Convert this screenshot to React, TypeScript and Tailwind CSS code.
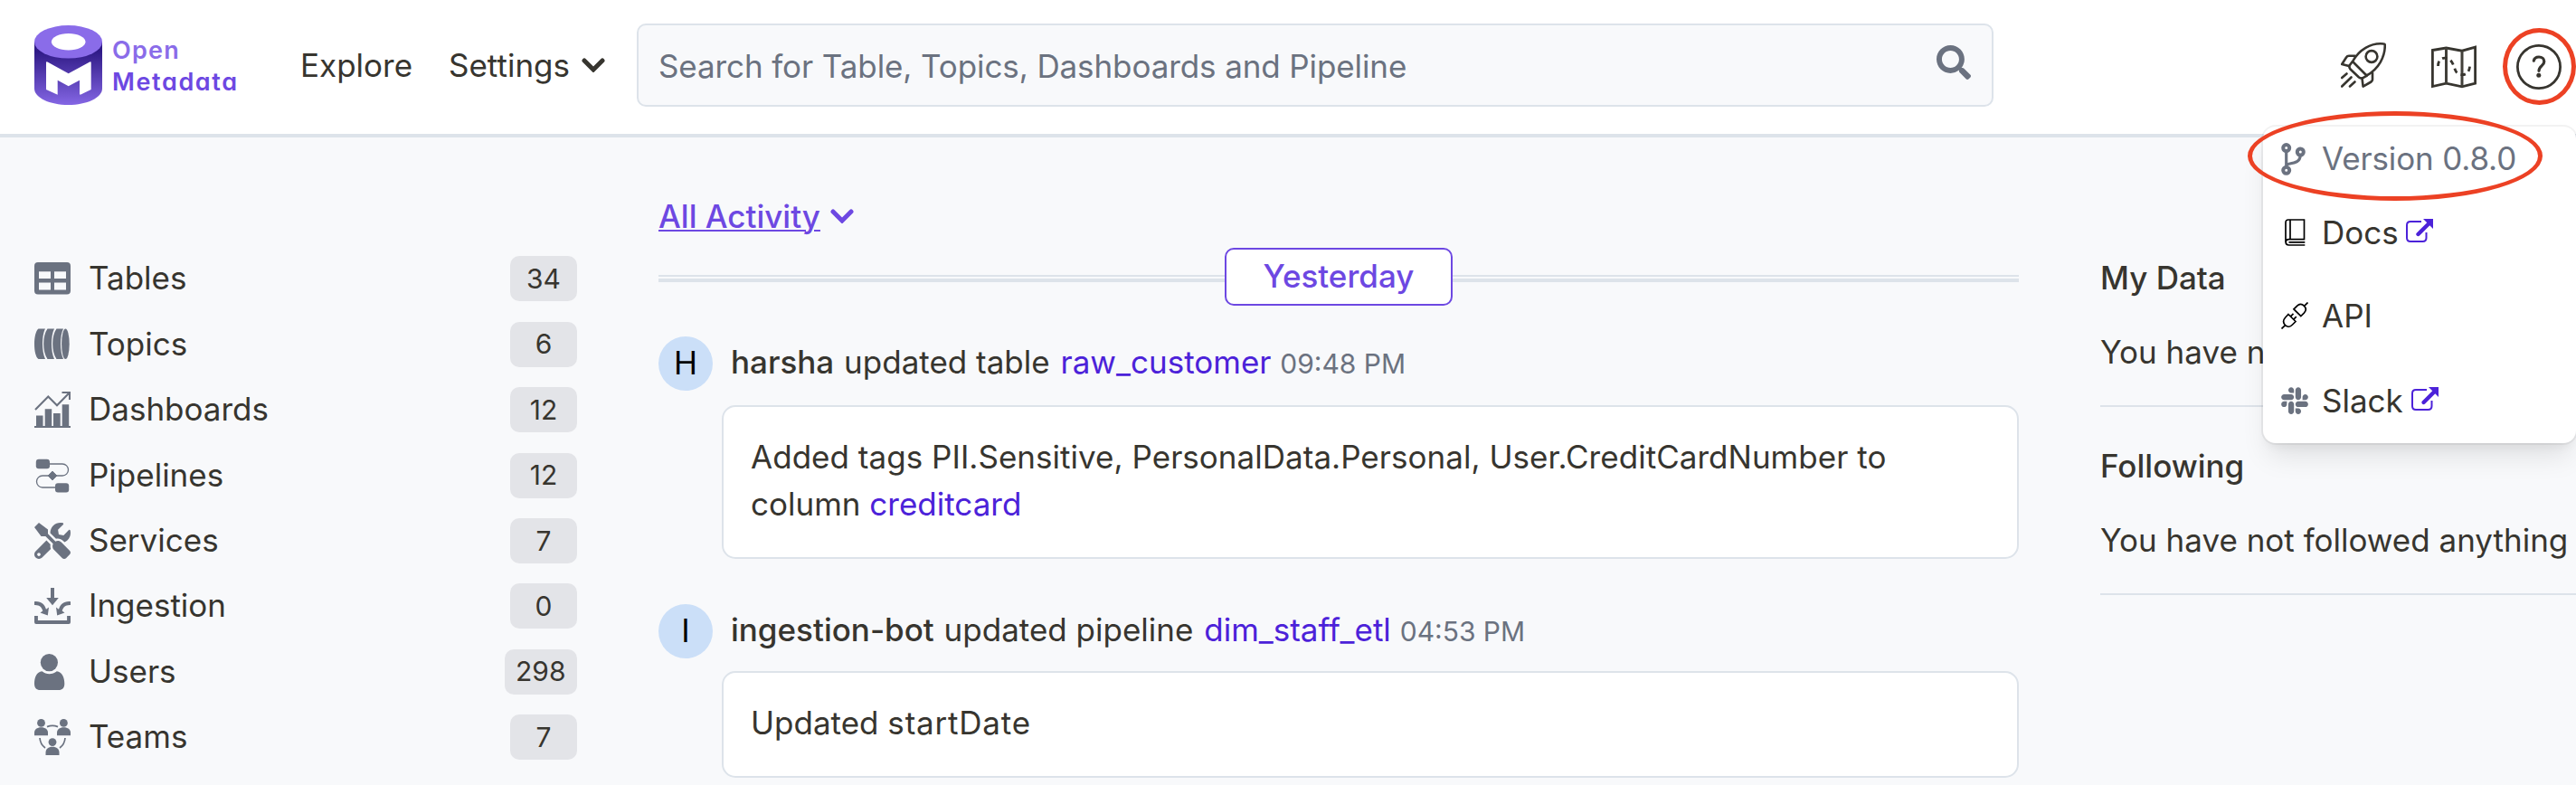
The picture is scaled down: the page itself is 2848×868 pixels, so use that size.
import React from "react";
import { FaSearch, FaSlack, FaTools } from "react-icons/fa";

type IconProps = { className?: string };

function LogoMark() {
  return (
    <svg width="75" height="88" viewBox="0 0 75 88">
      <defs>
        <linearGradient id="cylinder" x1="0" y1="0" x2="0" y2="1">
          <stop offset="0.15" stopColor="#2f1a86" />
          <stop offset="1" stopColor="#8466e4" />
        </linearGradient>
      </defs>
      <path d="M0 18V70C0 80 16.8 88 37.5 88S75 80 75 70V18Z" fill="url(#cylinder)" />
      <ellipse cx="37.5" cy="18.3" rx="37.5" ry="18.3" fill="#8a6ce9" />
      <ellipse cx="37.7" cy="18.2" rx="18.8" ry="9.2" fill="#fff" />
      <path
        d="M13 41.2Q13 39.6 14.5 40.4L37.7 53.3L61.2 40.4Q62.7 39.6 62.7 41.2V71L51.4 76.6Q50 77.2 50 75.6V60.7L37.7 67.3L25.7 60.7V76.7L13 71Z"
        fill="#fff"
      />
    </svg>
  );
}

function Chevron({ className }: IconProps) {
  return (
    <svg width="26" height="16" viewBox="0 0 26 16" fill="none" className={className}>
      <path d="M3 3L13 13L23 3" stroke="currentColor" strokeWidth="5" strokeLinecap="round" strokeLinejoin="miter" />
    </svg>
  );
}

function RocketIcon() {
  return (
    <svg width="50" height="50" viewBox="0 0 50 50" fill="none" stroke="#37352f" strokeWidth="2.6" strokeLinecap="round" strokeLinejoin="round">
      <path d="M13 21C20 8 33 0 47.5 1.5Q48.8 1.6 48.8 3C48.8 16 42 29 28.5 36.5Z" />
      <path d="M12.500 21.500L9.500 25.500Q9 27.500 10.500 29.500L20 38.500Q22 40 24 39.300L28.500 36.800" />
      <path d="M9 26L1.200 24L6 16.500Q7 14.800 9 14.800H15.500" />
      <path d="M23.500 39.500L24.600 48.600L33.500 43.500Q34.800 42.500 35 41V33.500" />
      <circle cx="34" cy="15.500" r="6.400" />
      <path d="M1.200 39L6.500 34.500M1.200 48.500L11.500 38.500M10 48.500L15.500 43.500" />
    </svg>
  );
}

function MapIcon() {
  return (
    <svg width="50" height="50" viewBox="0 0 50 50" fill="none" stroke="#37352f" strokeWidth="2.800">
      <path d="M1.400 6.500L16.500 4L34 7.200L48.600 3.200V43.200L34 46.800L16.500 43.200L1.400 46.500Z" />
      <path d="M16.500 4V43.200M34 7.200V46.800" strokeWidth="3" stroke="#42403a" />
      <path d="M7.500 24C7.500 14 17 13 21.500 18C26.500 23.500 25 32 32 33.500C38.500 34.500 42.700 31 42.700 22" strokeDasharray="5.500 4.500" />
    </svg>
  );
}

function HelpIcon() {
  return (
    <svg width="50" height="50" viewBox="0 0 50 50" fill="none" stroke="#37352f">
      <circle cx="25" cy="25" r="23.600" strokeWidth="2.800" />
      <path d="M19.300 18.200C19.800 15.500 22 14 25 14C28.500 14 30.800 16 30.800 19C30.800 24 25 23.800 25 29.300" strokeWidth="3.200" strokeLinecap="round" />
      <circle cx="24.800" cy="34.300" r="2.500" fill="#37352f" stroke="none" />
    </svg>
  );
}

function TableIcon() {
  return (
    <svg width="40" height="40" viewBox="0 0 40 40" fill="currentColor">
      <path
        fillRule="evenodd"
        d="M4 2H36Q40 2 40 6V33.500Q40 37.500 36 37.500H4Q0 37.500 0 33.500V6Q0 2 4 2ZM5 12.300V20H18V12.300ZM22 12.300V20H35V12.300ZM5 24.500V32.500H18V24.500ZM22 24.500V32.500H35V24.500Z"
      />
    </svg>
  );
}

function TopicIcon() {
  return (
    <svg width="40" height="40" viewBox="0 0 40 40" fill="currentColor">
      <path d="M4.500 2.500H12C8 10 8 28 12 36H4.500C-1.500 32-1.500 7 4.500 2.500Z" />
      <path d="M14.500 2.500H22C18 10 18 28 22 36H14.500C8.800 28 8.800 10 14.500 2.500Z" />
      <path d="M24.500 2.500H32C28 10 28 28 32 36H24.500C18.800 28 18.800 10 24.500 2.500Z" />
      <ellipse cx="34.400" cy="19.300" rx="4.300" ry="16.800" />
    </svg>
  );
}

function DashboardIcon() {
  return (
    <svg width="40" height="40" viewBox="0 0 40 40" fill="currentColor">
      <path d="M2 26.500H9.500V38H2ZM11.700 19.300H19.200V38H11.700ZM21 24H28.700V38H21ZM30.700 14.200H38.200V38H30.700ZM0 38H40V40H0Z" />
      <path d="M1 20L15.300 5.500L25 15.200L38.500 1.500M30.500 1H39V9" fill="none" stroke="currentColor" strokeWidth="2.100" />
    </svg>
  );
}

function PipelineIcon() {
  return (
    <svg width="40" height="40" viewBox="0 0 40 40" fill="currentColor">
      <path d="M15 7H31A6.500 6.500 0 0 1 31 20H9A6.500 6.500 0 0 0 9 33H25" fill="none" stroke="currentColor" strokeWidth="1.300" />
      <rect x="1.800" y="1.800" width="15.200" height="10.400" rx="3" />
      <rect x="23" y="28.200" width="15.200" height="10.200" rx="3" />
      <path d="M20 15L25 20L20 25L15 20Z" stroke="currentColor" strokeLinejoin="round" strokeWidth="0.800" />
    </svg>
  );
}

function IngestionIcon() {
  return (
    <svg width="40" height="40" viewBox="0 0 40 40" fill="currentColor">
      <path d="M18 0H22V11H26.800L20 19.300L13.200 11H18Z" />
      <path d="M0 31H3.900V36H36.100V31H40V38Q40 40 38 40H2Q0 40 0 38Z" />
      <path d="M0 15.200C7.500 14.500 11.500 18.500 13 23.800L16 21.500L14.800 30.600L6.500 27.500L9.300 25.500C8.300 21.500 5.500 18.600 0 19Z" />
      <path d="M40 15.200C32.500 14.500 28.500 18.500 27 23.800L24 21.500L25.200 30.600L33.500 27.500L30.700 25.500C31.700 21.500 34.500 18.600 40 19Z" />
    </svg>
  );
}

function UserIcon() {
  return (
    <svg width="40" height="40" viewBox="0 0 40 40" fill="currentColor">
      <circle cx="16.400" cy="9.600" r="9.600" />
      <path d="M8.500 19.300C2.500 20 0 26 0 33C0 37.500 2.300 40 6.500 40H26.800C31 40 33.300 37.500 33.300 33C33.300 26 30.500 20 24.800 19.300C22.500 21.300 19.500 22.300 16.600 22.300S10.800 21.300 8.500 19.300Z" />
    </svg>
  );
}

function TeamIcon() {
  return (
    <svg width="40" height="40" viewBox="0 0 40 40" fill="currentColor">
      <circle cx="7.500" cy="4.400" r="4.400" />
      <path d="M0 18.300V15C0 11.500 3 9.200 7.500 9.200S15 11.500 15 15V18.300Z" />
      <circle cx="32.400" cy="4.400" r="4.400" />
      <path d="M25 18.300V15C25 11.500 28 9.200 32.500 9.200S40 11.500 40 15V18.300Z" />
      <circle cx="20" cy="25.600" r="4.400" />
      <path d="M12.500 40V37C12.500 33 15.500 30.700 20 30.700S27.500 33 27.500 37V40Z" />
      <path d="M14 8.600Q20 6 26 8.600M6 21Q6.500 28 12 32M34 21Q33.500 28 28 32" fill="none" stroke="currentColor" strokeWidth="1.700" />
    </svg>
  );
}

function BranchIcon() {
  return (
    <svg width="27" height="36" viewBox="0 0 27 36" fill="none" stroke="#6b7280">
      <circle cx="5.700" cy="5.600" r="3.500" strokeWidth="4" />
      <circle cx="21.300" cy="10" r="3.500" strokeWidth="4" />
      <circle cx="5.700" cy="30.300" r="3.500" strokeWidth="4" />
      <path d="M5.700 9V27M21.300 13.500C21 21.500 15 22 7 23.500" strokeWidth="3.200" />
    </svg>
  );
}

function BookIcon() {
  return (
    <svg width="24" height="30" viewBox="0 0 24 30" fill="none" stroke="#000" strokeWidth="1.700">
      <path d="M22.300 1H4Q1 1 1 4V26M21.500 1V22.500M6 1V22.500M22.300 22.700H4.500C0 22.700 0 29 4.500 29H22.300M4.500 25.800H22.300" />
    </svg>
  );
}

function PlugIcon() {
  return (
    <svg width="30" height="30" viewBox="0 0 30 30" fill="none" stroke="#000" strokeWidth="1.700">
      <path d="M29.500 0.500L25.300 4.700M14 7.800L21.800 15.600L25.300 12.200C28 9.300 28 6.800 25.500 4.300C23.300 2 20.300 1.800 17.500 4.300ZM8 13.500L16 21.500L12.500 25C9.800 27.800 7 28 4.500 25.500C2 23 2 20 4.700 17ZM4.700 25.300L0.500 29.500M10.500 15.800L13.500 12.800M13.800 19.200L16.800 16.200" />
    </svg>
  );
}

function ExternalIcon() {
  return (
    <svg width="30" height="30" viewBox="0 0 30 30" fill="none" stroke="#4c22d9">
      <path d="M17 3H5Q1 3 1 7V21Q1 25 5 25H18.500Q22.500 25 22.500 21V15" strokeWidth="2" />
      <path d="M13.500 17L25.500 5" strokeWidth="4.400" strokeLinecap="round" />
      <path d="M19 0H30V11Z" fill="#4c22d9" stroke="none" />
    </svg>
  );
}

const assets: { label: string; count: number; icon: React.ReactNode }[] = [
  { label: "Tables", count: 34, icon: <TableIcon /> },
  { label: "Topics", count: 6, icon: <TopicIcon /> },
  { label: "Dashboards", count: 12, icon: <DashboardIcon /> },
  { label: "Pipelines", count: 12, icon: <PipelineIcon /> },
  { label: "Services", count: 7, icon: <FaTools size={40} /> },
  { label: "Ingestion", count: 0, icon: <IngestionIcon /> },
  { label: "Users", count: 298, icon: <UserIcon /> },
  { label: "Teams", count: 7, icon: <TeamIcon /> },
];

function Header() {
  return (
    <header className="flex h-[152px] items-center border-b-4 border-[#dde3ea] bg-white pb-1 pl-[38px] pr-4">
      <div className="flex w-[294px] items-center gap-[11px]">
        <LogoMark />
        <div className="pt-0.5 text-[27px] leading-[35px] font-semibold [font-feature-settings:'cv11']">
          <div className="tracking-[1.2px] text-[#8a6ce9]">Open</div>
          <div className="tracking-[1.6px] text-[#6d48e2]">Metadata</div>
        </div>
      </div>
      <nav className="flex w-[372px] items-center">
        <span className="w-[164px]">Explore</span>
        <span className="flex items-center gap-[13px]">
          Settings
          <Chevron />
        </span>
      </nav>
      <div className="flex h-[92px] w-[1500px] items-center justify-between rounded-[10px] border-2 border-[#dde3ea] bg-[#f8f9fb] pr-[23px] pl-[22px] text-[#6b7280]">
        <span className="pt-0.5 tracking-[-0.1px]">Search for Table, Topics, Dashboards and Pipeline</span>
        <FaSearch size={38} className="mb-1.5" />
      </div>
      <div className="ml-auto flex items-center pt-1">
        <span className="mr-[50px] -mt-1">
          <RocketIcon />
        </span>
        <span className="mr-11">
          <MapIcon />
        </span>
        <HelpIcon />
      </div>
    </header>
  );
}

function Sidebar() {
  return (
    <aside className="w-[728px] pt-[120.3px] pr-[90px] pl-[38px]">
      {assets.map((a) => (
        <div key={a.label} className="flex h-[72.4px] items-center">
          <span className="w-[60px] text-[#6b7280]">{a.icon}</span>
          <span className="pb-0.5">{a.label}</span>
          <span className="ml-auto flex h-[50px] min-w-[74px] items-center justify-center rounded-[10px] bg-[#e3e4e8] px-[12.5px] pb-px text-[30px]">
            {a.count}
          </span>
        </div>
      ))}
    </aside>
  );
}

type PostProps = {
  initial: string;
  user: string;
  action: string;
  entity: string;
  time: string;
  className: string;
  children: React.ReactNode;
};

function Post({ initial, user, action, entity, time, className, children }: PostProps) {
  return (
    <article className={className}>
      <div className="flex h-[60px] items-center">
        <span className="flex size-[60px] items-center justify-center rounded-full bg-[#cbdff8] pb-0.5 text-black">{initial}</span>
        <p className="pb-[3px] pl-5 whitespace-nowrap">
          <span className="mr-px font-medium">{user}</span> {action}{" "}
          <span className="ml-0.5 text-[#4c22d9]">{entity}</span>{" "}
          <span className="text-[30px] text-[#6b7280]">{time}</span>
        </p>
      </div>
      {children}
    </article>
  );
}

function Feed() {
  return (
    <main className="w-[1504px] pt-[61px]">
      <div className="flex h-[52px] items-center gap-[11px] font-medium text-[#6d48e2]">
        <span className="underline decoration-2 underline-offset-2">All Activity</span>
        <Chevron />
      </div>
      <div className="mt-[9px] flex h-16 items-center">
        <div className="mt-1 h-2 flex-1 border-t-2 border-b-4 border-[#dde3ea]" />
        <div className="flex h-16 w-[252px] items-center justify-center rounded-[10px] border-2 border-[#6d48e2] bg-white pb-0.5 font-medium text-[#6d48e2]">
          Yesterday
        </div>
        <div className="mt-1 h-2 flex-1 border-t-2 border-b-4 border-[#dde3ea]" />
      </div>
      <Post className="mt-[34px]" initial="H" user="harsha" action="updated table" entity="raw_customer" time="09:48 PM">
        <div className="mt-4 ml-[70px] h-[170px] rounded-[15px] border-2 border-[#dde3ea] bg-white px-[30px] pt-[29px]">
          <span className="tracking-[0.03px]">Added tags PII.Sensitive, PersonalData.Personal, User.CreditCardNumber to</span>
          <br />
          column <span className="text-[#4c22d9]">creditcard</span>
        </div>
      </Post>
      <Post className="mt-[50px]" initial="I" user="ingestion-bot" action="updated pipeline" entity="dim_staff_etl" time="04:53 PM">
        <div className="mt-3.5 ml-[70px] h-[118px] rounded-[15px] border-2 border-[#dde3ea] bg-white px-[30px] pt-[29px]">
          Updated <span className="tracking-[0.8px]">startDate</span>
        </div>
      </Post>
    </main>
  );
}

function Summary() {
  return (
    <aside className="ml-[90px] flex-1 pt-[129px] whitespace-nowrap">
      <section className="border-b-2 border-[#dde3ea] pb-[33px]">
        <h2 className="font-medium">My Data</h2>
        <p className="mt-[30px]">You have not owned anything</p>
      </section>
      <section className="mt-[39px] border-b-2 border-[#dde3ea] pb-[33px]">
        <h2 className="font-medium">Following</h2>
        <p className="mt-[30px]">You have not followed anything</p>
      </section>
    </aside>
  );
}

function HelpMenu() {
  return (
    <div className="absolute top-[140px] left-[2502px] h-[350px] w-[346px] rounded-[14px] bg-white pl-5 shadow-[0_0_0_2px_rgba(0,0,0,0.05),0_20px_30px_-6px_rgba(0,0,0,0.1),0_8px_12px_-4px_rgba(0,0,0,0.05)]">
      <div className="flex h-[71px] items-center text-[#6b7280]">
        <span className="w-[45px]">
          <BranchIcon />
        </span>
        <span className="pb-0.5 tracking-[-0.15px]">Version 0.8.0</span>
      </div>
      <div className="flex h-[91px] items-center">
        <span className="w-[45px] pl-1">
          <BookIcon />
        </span>
        <span className="pt-px">Docs</span>
        <span className="ml-2">
          <ExternalIcon />
        </span>
      </div>
      <div className="flex h-[94px] items-center">
        <span className="w-[45px]">
          <PlugIcon />
        </span>
        API
      </div>
      <div className="flex h-[94px] items-center">
        <span className="w-[45px]">
          <FaSlack size={34} className="-ml-0.5 text-[#6b7280]" />
        </span>
        <span className="pb-px">Slack</span>
        <span className="ml-[9px]">
          <ExternalIcon />
        </span>
      </div>
    </div>
  );
}

export default function App() {
  return (
    <div className="relative h-[868px] w-[2848px] overflow-hidden bg-[#f8f9fb] font-['Inter',sans-serif] text-[35px] leading-[52px] text-[#37352f] [&_svg]:block">
      <Header />
      <div className="flex">
        <Sidebar />
        <Feed />
        <Summary />
      </div>
      <HelpMenu />
      <div className="absolute top-[123px] left-[2485px] h-[99px] w-[326px] rounded-[50%] border-[5px] border-[#ec4124]" />
      <div className="absolute top-[31px] left-[2767px] h-[85px] w-[81px] rounded-[50%] border-[5px] border-[#ec4124]" />
    </div>
  );
}
